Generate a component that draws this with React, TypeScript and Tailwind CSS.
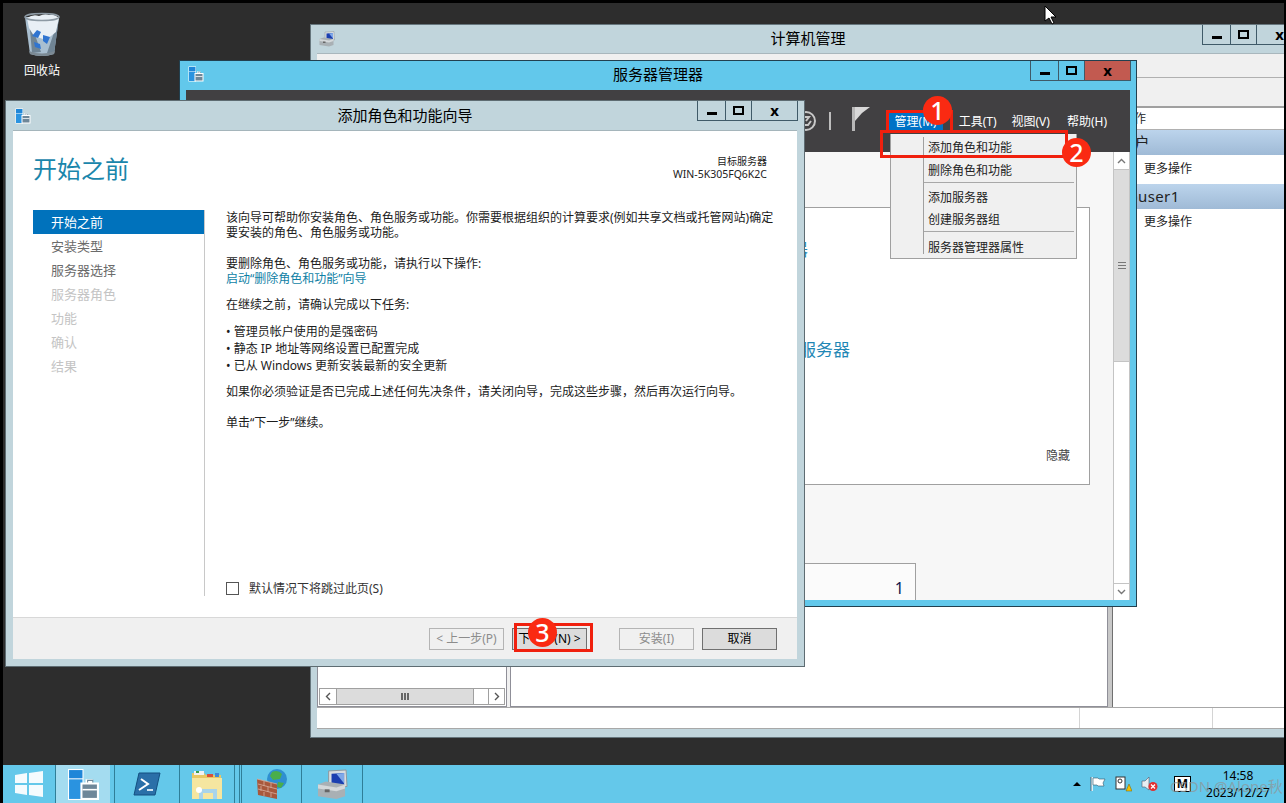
import React from "react";

const FONT = { fontFamily: '"Noto Sans", "Noto Sans CJK SC", sans-serif' };

const ServerIcon = ({ size = 16 }: { size?: number }) => (
  <svg width={size} height={size} viewBox="0 0 32 32">
    <rect x="1" y="1" width="15" height="30" fill="#fff" />
    <rect x="2" y="2" width="13" height="8" fill="#1f86d8" />
    <rect x="2" y="11" width="13" height="19" fill="#2a93e0" />
    <path d="M13 14h5v-3h7v3h6v17H13z" fill="#fff" />
    <path d="M15 16h14v13H15z" fill="#6e8799" />
    <path d="M20 14v-2h5v2" fill="none" stroke="#6e8799" />
    <path d="M15 21h14" stroke="#fff" strokeWidth="1.5" />
  </svg>
);

const ComputerIcon = ({ size = 16 }: { size?: number }) => (
  <svg width={size} height={size} viewBox="0 0 32 32">
    <path d="M12 2l18-1 1 17-19 2z" fill="#d8dde0" stroke="#8f979c" />
    <path d="M15 5l13-1v12l-13 1z" fill="#1b3fb0" />
    <path d="M20 5l8-1v11z" fill="#7fa8e8" />
    <path d="M1 16l8-3 20 3v12l-9 3-19-3z" fill="#a9b0b4" />
    <path d="M1 16l19 3 9-3v4l-9 3-19-3z" fill="#d4d8da" />
    <rect x="8" y="21" width="5" height="3" fill="#666" />
  </svg>
);

const WinControls = ({ hot }: { hot?: boolean }) => (
  <div className="flex h-[20px] shrink-0 border-x border-b border-[#3f5a68]">
    <div className="flex w-[27px] items-center justify-center pt-[5px]">
      <div className="h-[3px] w-[10px] bg-black" />
    </div>
    <div className="flex w-[26px] items-center justify-center border-l border-[#3f5a68]">
      <div className="h-[9px] w-[11px] border-2 border-black" />
    </div>
    <div
      className={
        hot
          ? "flex w-[46px] items-center justify-center border-l border-[#3f5a68] bg-[#c25a50] text-[15px] font-bold leading-none text-black"
          : "flex w-[46px] items-center justify-center border-l border-[#3f5a68] text-[15px] font-bold leading-none text-black"
      }
    >
      x
    </div>
  </div>
);

const SectionHead = ({ text }: { text: string }) => (
  <div className="flex h-[25px] items-center bg-gradient-to-b from-[#bcd4ec] to-[#9fbad6] pl-[6px] text-[15px] leading-none tracking-wide text-[#222]">
    {text}
  </div>
);

const WizBtn = ({ label, on }: { label: string; on?: boolean }) => (
  <div
    className={
      on
        ? "flex h-[22px] w-[75px] items-center justify-center border border-[#707070] bg-[#dcdcdc] text-[12px] text-black"
        : "flex h-[22px] w-[75px] items-center justify-center border border-[#b4b4b4] bg-[#f0f0f0] text-[12px] text-[#8c8c8c]"
    }
  >
    {label}
  </div>
);

const Mark = ({ n, cls }: { n: string; cls: string }) => (
  <div
    className={
      "absolute flex h-[29px] w-[29px] items-center justify-center rounded-full bg-[#fa2a12] text-[25px] font-medium leading-none text-white " +
      cls
    }
  >
    {n}
  </div>
);

const ComputerWindow = () => (
  <div className="absolute left-[307px] top-[21px] flex h-[714px] w-[996px] flex-col border border-[#66767d] bg-[#c1d5dc]">
    <div className="relative flex h-[28px] shrink-0 justify-end pr-[2px]">
      <div className="absolute left-[8px] top-[6px]">
        <ComputerIcon />
      </div>
      <div className="absolute inset-x-0 top-[2px] text-center text-[15px] text-black">计算机管理</div>
      <WinControls />
    </div>
    <div className="mx-[6px] mb-[8px] flex flex-1 flex-col border-t border-[#a9b7bd] bg-[#f0f0f0]">
      <div className="h-[24px] border-b border-[#b0b0b0]" />
      <div className="h-[30px] border-b-2 border-[#a0a0a0]" />
      <div className="flex flex-1">
        <div className="flex w-[190px] flex-col justify-end border border-[#8f8f98] bg-white p-px">
          <div className="flex h-[17px] border border-[#a0a0a0]">
            <div className="flex w-[17px] items-center justify-center border-r border-[#a0a0a0]">
              <svg width="6" height="9" viewBox="0 0 6 9"><path d="M5 1L1.5 4.5 5 8" fill="none" stroke="#555" strokeWidth="1.4" /></svg>
            </div>
            <div className="flex w-[137px] items-center justify-center gap-px border-r border-[#a0a0a0] bg-[#dcdcdc]">
              <div className="h-[7px] w-[2px] bg-[#666]" />
              <div className="h-[7px] w-[2px] bg-[#666]" />
              <div className="h-[7px] w-[2px] bg-[#666]" />
            </div>
            <div className="w-[15px] border-r border-[#a0a0a0]" />
            <div className="flex flex-1 items-center justify-center">
              <svg width="6" height="9" viewBox="0 0 6 9"><path d="M1 1l3.5 3.5L1 8" fill="none" stroke="#555" strokeWidth="1.4" /></svg>
            </div>
          </div>
        </div>
        <div className="w-[3px] bg-[#f0f0f0]" />
        <div className="w-[598px] border border-[#8f8f98] bg-white" />
        <div className="w-[4px] bg-[#c8c8c8]" />
        <div className="flex flex-1 flex-col border-l border-[#707070] bg-white">
          <div className="flex h-[22px] items-center border-b border-[#b0b0b0] pl-[9px] text-[12px] text-[#222]">操作</div>
          <SectionHead text="用户" />
          <div className="h-[29px] pl-[31px] pt-[4px] text-[12px] leading-[20px] text-[#222]">更多操作</div>
          <SectionHead text="opuser1" />
          <div className="pl-[31px] pt-[3px] text-[12px] leading-[20px] text-[#222]">更多操作</div>
        </div>
      </div>
      <div className="flex h-[22px] shrink-0 border-y border-[#a8a8a8] bg-white">
        <div className="w-[763px] border-r border-[#d4d4d4]" />
        <div className="w-[133px] border-r border-[#d4d4d4]" />
      </div>
    </div>
  </div>
);

const ServerManagerWindow = () => (
  <div className="absolute left-[176px] top-[57px] flex h-[547px] w-[958px] flex-col border border-[#22404f] bg-[#62c8eb]">
    <div className="relative flex h-[29px] shrink-0 justify-end pr-[5px]">
      <div className="absolute left-[8px] top-[5px]">
        <ServerIcon />
      </div>
      <div className="absolute inset-x-0 top-[2px] text-center text-[15px] text-black">服务器管理器</div>
      <WinControls hot />
    </div>
    <div className="mx-[6px] mb-[6px] flex flex-1 flex-col overflow-hidden">
      <div className="flex h-[62px] shrink-0 items-start justify-end bg-[#414042] pr-[17px] pt-[23px] text-[12px] text-white">
        <svg width="22" height="26" viewBox="0 0 22 26" className="mr-[11px] -mt-[5px]">
          <circle cx="10" cy="13" r="9" fill="none" stroke="#c8c8c8" strokeWidth="2" />
          <path d="M5 9h8l-3 4M7 17h5l3-4" fill="none" stroke="#c8c8c8" strokeWidth="2" />
        </svg>
        <div className="mr-[21px] -mt-px h-[18px] w-[2px] bg-[#bdbdbd]" />
        <svg width="19" height="24" viewBox="0 0 19 24" className="mr-[18px] -mt-[6px]">
          <path d="M0 0h3v24H0z" fill="#b8b8b8" />
          <path d="M3 0h15l-8 6-7 8z" fill="#d8d8d8" />
        </svg>
        <div className="flex h-[17px] items-center bg-[#0072c6] px-[6px]">管理(M)</div>
        <div className="ml-[10px] flex h-[17px] items-center px-[6px]">工具(T)</div>
        <div className="ml-[3px] flex h-[17px] items-center px-[6px]">视图(V)</div>
        <div className="ml-[5px] flex h-[17px] items-center px-[6px]">帮助(H)</div>
      </div>
      <div className="flex min-h-0 flex-1">
        <div className="flex flex-1 flex-col bg-[#f7f7f7] pl-[24px] pr-[23px] pt-[55px]">
          <div className="flex h-[278px] flex-col border border-[#a0a0a0] bg-white pt-[30px] text-[17px] leading-[24px] text-[#1f87b5]">
            <div className="ml-[461px]">配置此本地服务器</div>
            <div className="ml-[460px] mt-[26px]">添加角色和功能</div>
            <div className="ml-[452px] mt-[26px]">添加要管理的其他服务器</div>
            <div className="mr-[19px] mt-auto self-end pb-[20px] text-[12px] leading-[16px] text-[#444]">隐藏</div>
          </div>
          <div className="mt-[78px] flex h-[37px] w-[706px] items-start justify-end border-x border-t border-[#a0a0a0] bg-[#fbfbfb] pr-[11px] pt-[13px] text-[16px] leading-[22px] text-[#102050]">
            1
          </div>
        </div>
        <div className="flex w-[17px] shrink-0 flex-col border-x border-[#c4c4c4] bg-white">
          <div className="flex h-[18px] items-center justify-center border-b border-[#c4c4c4] text-[#777]">
            <svg width="9" height="6" viewBox="0 0 9 6"><path d="M1 5l3.5-3.5L8 5" fill="none" stroke="#777" strokeWidth="1.4" /></svg>
          </div>
          <div className="flex h-[192px] items-center justify-center border-b border-[#c4c4c4] bg-[#dcdcdc]">
            <div className="h-[7px] w-[8px] border-y border-[#777] bg-[linear-gradient(#dcdcdc_35%,#777_35%,#777_65%,#dcdcdc_65%)]" />
          </div>
          <div className="flex-1" />
          <div className="flex h-[17px] items-center justify-center border-t border-[#c4c4c4]">
            <svg width="9" height="6" viewBox="0 0 9 6"><path d="M1 1l3.5 3.5L8 1" fill="none" stroke="#777" strokeWidth="1.4" /></svg>
          </div>
        </div>
      </div>
    </div>
    {/* 管理 menu */}
    <div className="absolute left-[710px] top-[73px] flex h-[125px] w-[187px] flex-col border border-t-0 border-[#a0a0a0] bg-[#f0f0f0] pb-[2px] pl-[32px] pr-[2px] pt-[1px] text-[12px] leading-[22px] text-[#222]">
      <div className="absolute bottom-[4px] left-[32px] top-[3px] w-px bg-[#a0a0a0]" />
      <div className="h-[23px] shrink-0 pl-[5px] pt-[2px]">添加角色和功能</div>
      <div className="h-[24px] shrink-0 pl-[5px] pt-[2px]">删除角色和功能</div>
      <div className="h-px shrink-0 bg-[#a8a8a8]" />
      <div className="mt-[2px] h-[22px] shrink-0 pl-[5px] pt-[2px]">添加服务器</div>
      <div className="h-[24px] shrink-0 pl-[5px] pt-[2px]">创建服务器组</div>
      <div className="h-px shrink-0 bg-[#a8a8a8]" />
      <div className="mt-[2px] h-[22px] shrink-0 pl-[5px] pt-[3px]">服务器管理器属性</div>
    </div>
  </div>
);

const steps = ["安装类型", "服务器选择", "服务器角色", "功能", "确认", "结果"];

const WizardWindow = () => (
  <div className="absolute left-[2px] top-[97px] flex h-[567px] w-[800px] flex-col border border-[#5e6c72] bg-[#c1d5dc]">
    <div className="relative flex h-[29px] shrink-0 justify-end pr-[6px]">
      <div className="absolute left-[9px] top-[7px]">
        <ServerIcon />
      </div>
      <div className="absolute inset-x-0 top-[3px] text-center text-[15px] text-black">添加角色和功能向导</div>
      <WinControls />
    </div>
    <div className="mx-[7px] mb-[7px] flex flex-1 flex-col border-t border-[#a5b5bb]">
      <div className="flex h-[486px] shrink-0 flex-col bg-white">
        <div className="flex h-[79px] shrink-0 items-start justify-between pl-[20px] pr-[30px]">
          <div className="pt-[20px] text-[24px] leading-[36px] text-[#1a86ab]">开始之前</div>
          <div className="pt-[24px] text-right text-[10px] leading-[13px] text-[#222]">
            <div>目标服务器</div>
            <div className="text-[10.5px]">WIN-5K305FQ6K2C</div>
          </div>
        </div>
        <div className="flex flex-1">
          <div className="flex h-[386px] w-[192px] shrink-0 flex-col border-r border-[#c8c8c8] pl-[20px]">
            <div className="flex h-[24px] items-center bg-[#0072bc] pl-[18px] pt-px text-[13px] text-white">开始之前</div>
            {steps.map((s, i) => (
              <div
                key={s}
                className={
                  i < 2
                    ? "flex h-[24px] items-center pl-[18px] pt-px text-[13px] text-[#6b6b6b]"
                    : "flex h-[24px] items-center pl-[18px] pt-px text-[13px] text-[#c4c4c4]"
                }
              >
                {s}
              </div>
            ))}
          </div>
          <div className="flex min-w-0 flex-1 flex-col pl-[21px] text-[12px] leading-[15px] text-[#1c1c1c]">
            <p className="whitespace-nowrap">该向导可帮助你安装角色、角色服务或功能。你需要根据组织的计算要求(例如共享文档或托管网站)确定</p>
            <p>要安装的角色、角色服务或功能。</p>
            <p className="mt-[16px]">要删除角色、角色服务或功能，请执行以下操作:</p>
            <p className="text-[#0f7fa5]">启动“删除角色和功能”向导</p>
            <p className="mt-[11px]">在继续之前，请确认完成以下任务:</p>
            <ul className="mt-[12px] flex flex-col gap-[2px]">
              <li>• 管理员帐户使用的是强密码</li>
              <li>• 静态 IP 地址等网络设置已配置完成</li>
              <li>• 已从 Windows 更新安装最新的安全更新</li>
            </ul>
            <p className="mt-[11px]">如果你必须验证是否已完成上述任何先决条件，请关闭向导，完成这些步骤，然后再次运行向导。</p>
            <p className="mt-[16px]">单击“下一步”继续。</p>
            <div className="mb-[21px] mt-auto flex items-center gap-[10px] text-[#333]">
              <div className="h-[13px] w-[13px] border border-[#555] bg-white" />
              <span>默认情况下将跳过此页(S)</span>
            </div>
          </div>
        </div>
      </div>
      <div className="flex flex-1 items-start justify-end border-t border-[#d8d8d8] bg-[#f0f0f0] pr-[20px] pt-[10px]">
        <WizBtn label="< 上一步(P)" />
        <div className="ml-[8px]">
          <WizBtn label="下一步(N) >" on />
        </div>
        <div className="ml-[32px]">
          <WizBtn label="安装(I)" />
        </div>
        <div className="ml-[8px]">
          <WizBtn label="取消" on />
        </div>
      </div>
    </div>
  </div>
);

const RecycleBin = () => (
  <div className="absolute left-[14px] top-[9px] flex w-[50px] flex-col items-center text-[12px] text-white">
    <svg width="38" height="46" viewBox="0 0 38 46">
      <path d="M2 5l34 0-5 37q-12 4-24 0z" fill="#a9bfd0" />
      <path d="M6 6l12 34-9 1zM36 6l-5 36-7-1z" fill="#6f8494" />
      <path d="M4 6q6-4 12-2 6-3 10-1 5-2 10 3l-3 14-10 8-12-4-5-8z" fill="#e8eff5" />
      <ellipse cx="19" cy="5" rx="17" ry="3.5" fill="none" stroke="#8d9aa4" strokeWidth="1.5" />
      <path d="M9 24l5-6 4 2-3 6zM20 23l7 2-3 7-4-3zM11 30l6 2 1 5-6-2z" fill="#2f74d0" />
      <path d="M6 39q13 5 26 0l-1 3q-12 4-24 0z" fill="#7c8a94" />
    </svg>
    <div className="mt-[4px] leading-[18px]">回收站</div>
  </div>
);

const Tile = ({ w, children }: { w: string; children?: React.ReactNode }) => (
  <div className={"flex h-full shrink-0 items-center justify-center border-r border-[#2f7e98] " + w}>{children}</div>
);

const Taskbar = () => (
  <div className="relative flex h-[38px] shrink-0 items-stretch bg-[#64c8ea]">
    <Tile w="w-[53px]">
      <svg width="28" height="26" viewBox="0 0 28 26">
        <path d="M0 4l12-2v10H0zM14 2l14-2v12H14zM0 14h12v10L0 22zM14 14h14v12l-14-2z" fill="#f4fbfe" />
      </svg>
    </Tile>
    <Tile w="w-[59px] pr-[4px]">
      <div className="flex h-full w-full items-center justify-center bg-[#a4dcf0]">
        <ServerIcon size={33} />
      </div>
    </Tile>
    <Tile w="w-[65px]">
      <svg width="28" height="24" viewBox="0 0 28 24">
        <path d="M6 1h21l-5 22H1z" fill="#2a6fa8" stroke="#134f80" />
        <path d="M8 7l7 5-9 6" fill="none" stroke="#fff" strokeWidth="2" />
        <path d="M14 18h6" stroke="#d0e4f2" strokeWidth="2" />
      </svg>
    </Tile>
    <Tile w="w-[55px]">
      <svg width="32" height="30" viewBox="0 0 32 30">
        <path d="M1 4h12l2 2h15v24H1z" fill="#e8c864" />
        <path d="M3 2h10v4H3z" fill="#f2f2f2" />
        <path d="M5 2h3v2H5z" fill="#3aa04a" />
        <path d="M16 5h6v3h-6z" fill="#d8503c" />
        <path d="M24 4h4v4h-4z" fill="#3f8ad8" />
        <path d="M1 9h30v21H1z" fill="#f5e6a0" />
        <path d="M8 30V20h18v10h-4v-6H12v6z" fill="#a8d4ea" />
        <circle cx="8" cy="21" r="3" fill="#fff" />
      </svg>
    </Tile>
    <Tile w="w-[5px]" />
    <Tile w="w-[2px]" />
    <Tile w="w-[60px]">
      <svg width="32" height="32" viewBox="0 0 32 32">
        <circle cx="21" cy="11" r="10" fill="#2f8fd0" />
        <path d="M16 4q6-3 10 2l-2 5-7 1-3-4zM22 14l6 1-3 5-4-1z" fill="#4aae4a" />
        <path d="M1 11l20 5v15L2 27z" fill="#a8583c" />
        <path d="M1 11l20 5M2 16l19 5M2 21l19 5M8 13v5M15 15v5M5 18v5M12 19v5M8 24v4M15 25v4" stroke="#d8b0a0" strokeWidth="0.8" fill="none" />
      </svg>
    </Tile>
    <Tile w="w-[61px]">
      <ComputerIcon size={31} />
    </Tile>
    <div className="ml-auto flex items-center pr-[13px]">
      <div className="mr-[9px] h-0 w-0 border-x-[4px] border-b-[4px] border-x-transparent border-b-black" />
      <svg width="16" height="16" viewBox="0 0 16 16" className="mr-[9px]">
        <path d="M2 1v14" stroke="#fff" strokeWidth="1.5" />
        <path d="M3 2h5l1 1h6l-2 4 1 3H8L7 9H3z" fill="#fff" stroke="#33566a" strokeWidth="0.6" />
        <path d="M1 1v14" stroke="#223" strokeWidth="0.6" />
      </svg>
      <svg width="17" height="16" viewBox="0 0 17 16" className="mr-[9px]">
        <rect x="1" y="1" width="9" height="12" fill="#fff" stroke="#333" />
        <circle cx="5" cy="5" r="2" fill="none" stroke="#333" />
        <path d="M11 15l3-7 3 7z" fill="#f5c000" stroke="#776000" strokeWidth="0.5" />
      </svg>
      <svg width="17" height="16" viewBox="0 0 17 16" className="mr-[16px]">
        <path d="M1 5h3l4-4v13l-4-3H1z" fill="#e8eef2" stroke="#556" strokeWidth="0.6" />
        <circle cx="12" cy="10.5" r="4.5" fill="#e03030" />
        <path d="M10 8.5l4 4M14 8.5l-4 4" stroke="#fff" strokeWidth="1.3" />
      </svg>
      <div className="mr-[14px] flex h-[16px] w-[17px] items-center justify-center border border-black bg-white text-[12px] font-bold leading-none text-black">
        M
      </div>
      <div className="w-[66px] text-center text-[12px] leading-[17px] text-black">
        <div>14:58</div>
        <div>2023/12/27</div>
      </div>
    </div>
    <div className="absolute left-[1167px] top-[12px] text-[15px] leading-[18px] text-[#8a9aa0]/80">CSDN @Alone秋</div>
  </div>
);

export default function App() {
  return (
    <div className="relative h-[803px] w-[1286px] overflow-hidden bg-black pl-[3px] pr-[2px] pt-[3px]" style={FONT}>
      <div className="flex h-full flex-col overflow-hidden bg-[#2d2d2d]">
        <div className="relative flex-1">
          <RecycleBin />
          <ComputerWindow />
          <ServerManagerWindow />
          <WizardWindow />
        </div>
        <Taskbar />
      </div>

      {/* red notes drawn over the screenshot */}
      <div className="absolute left-[886px] top-[110px] h-[23px] w-[67px] border-[3px] border-[#f0200e]" />
      <div className="absolute left-[880px] top-[130px] h-[28px] w-[188px] border-[3px] border-[#f0200e]" />
      <div className="absolute left-[514px] top-[623px] h-[29px] w-[79px] border-[3px] border-[#f0200e]" />
      <Mark n="1" cls="left-[923px] top-[96px]" />
      <Mark n="2" cls="left-[1062px] top-[138px]" />
      <Mark n="3" cls="left-[528px] top-[618px]" />

      <svg width="13" height="20" viewBox="0 0 13 20" className="absolute left-[1044px] top-[5px]">
        <path d="M1 1v15l4-3 3 6 2-1-3-6h5z" fill="#fff" stroke="#000" />
      </svg>
    </div>
  );
}
